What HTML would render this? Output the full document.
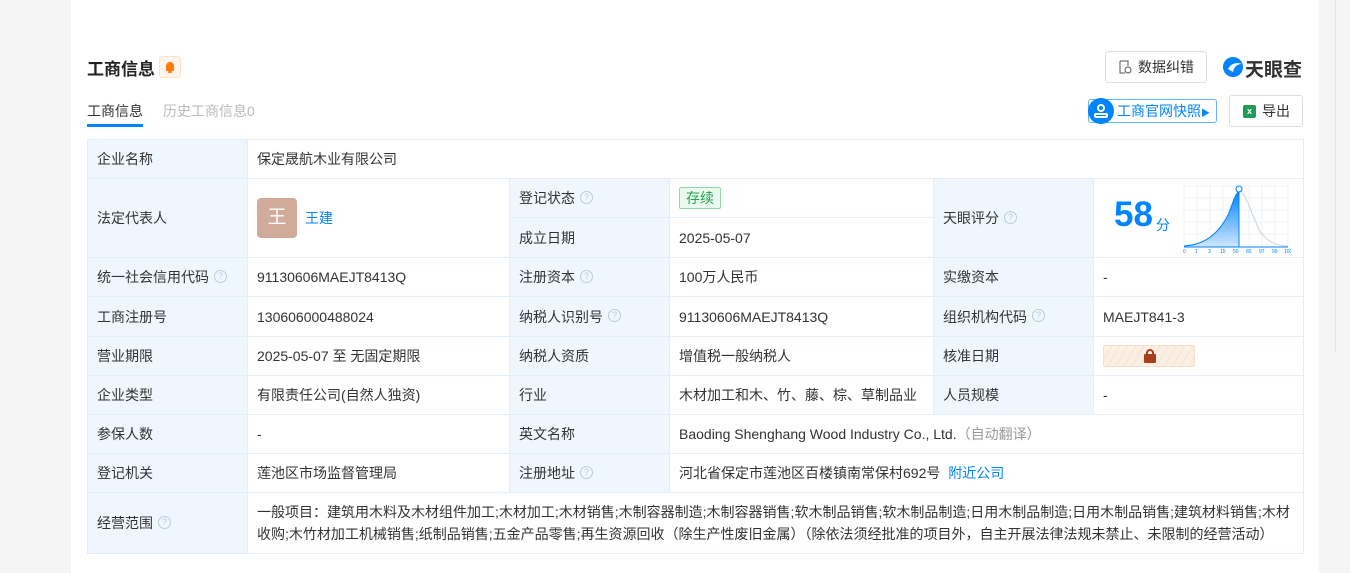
<!DOCTYPE html>
<html><head><meta charset="utf-8"><style>
*{margin:0;padding:0;box-sizing:border-box}
body{width:1350px;height:573px;background:#f5f5f5;font-family:"Liberation Sans","Noto Sans CJK SC",sans-serif;color:#333;font-size:14px;position:relative;overflow:hidden}
.card{position:absolute;left:71px;top:0;width:1248px;height:573px;background:#fff}
.abs{position:absolute}
table{position:absolute;left:87px;top:139px;border-collapse:collapse;table-layout:fixed;width:1216px}
td{border:1px solid #e4eef6;padding:0 9px;vertical-align:middle;font-size:14px;color:#333;white-space:nowrap}
td.l{background:#eff6fd}
.q{display:inline-block;width:13px;height:13px;border:1px solid #b8cde0;border-radius:50%;font-size:9px;line-height:11px;text-align:center;color:#b8cde0;margin-left:5px;vertical-align:middle;position:relative;top:-2px}
.blue{color:#0084ff}
</style></head><body>
<div class="card"></div>
<div style="position:absolute;left:1335px;top:0;width:1px;height:352px;background:#e3e3e3"></div>
<div class="abs" style="left:87px;top:55px;font-size:17px;font-weight:bold;color:#222">工商信息</div>
<div class="abs" style="left:159px;top:56px;width:22px;height:22px;border:1px solid #ffe0c8;background:#fff4ec;border-radius:3px"><div style="position:absolute;left:6px;top:5px;width:8px;height:9px;background:#ff7a0a;border-radius:4px 4px 1px 1px"></div><div style="position:absolute;left:8px;top:14px;width:4px;height:2px;background:#ff7a0a;border-radius:2px"></div></div>
<div class="abs" style="left:87px;top:101px;font-size:14px;color:#333">工商信息</div>
<div class="abs" style="left:87px;top:124px;width:56px;height:3px;background:#0084ff"></div>
<div class="abs" style="left:163px;top:101px;font-size:14px;color:#bbb">历史工商信息0</div>
<div class="abs" style="left:1105px;top:51px;width:102px;height:32px;border:1px solid #ddd;border-radius:3px;font-size:14px;line-height:30px;padding-left:32px">数据纠错
<svg style="position:absolute;left:13px;top:8px" width="13" height="14" viewBox="0 0 13 14"><path d="M1 1h8v5M1 1v12h5" stroke="#555" fill="none"/><circle cx="9" cy="10" r="3" stroke="#555" fill="none"/></svg></div>
<svg class="abs" style="left:1222px;top:56px" width="22" height="22" viewBox="0 0 22 22"><circle cx="11" cy="11" r="10" fill="#0084ff"/><path d="M6 13c3-6 9-7 14-5-4 0-8 2-9 8z" fill="#fff"/></svg>
<div class="abs" style="left:1245px;top:55px;font-size:19px;font-weight:bold;color:#333">天眼查</div>
<div class="abs" style="left:1088px;top:99px;width:129px;height:24px;border:1px solid #66b3ff;border-radius:3px;color:#0084ff;font-size:14px;line-height:22px;padding-left:28px">工商官网快照<span style="font-size:9px">▶</span></div>
<div class="abs" style="left:1088px;top:98px;width:26px;height:26px;border-radius:50%;background:#0084ff"><div style="position:absolute;left:9px;top:6px;width:8px;height:8px;border:2px solid #fff;border-radius:50%"></div><div style="position:absolute;left:6px;top:15px;width:14px;height:5px;border:2px solid #fff;border-radius:2px"></div></div>
<div class="abs" style="left:1229px;top:95px;width:74px;height:32px;border:1px solid #ddd;border-radius:3px;font-size:14px;line-height:30px;padding-left:32px">导出
<div style="position:absolute;left:13px;top:9px;width:13px;height:13px;background:#1f9d55;border-radius:2px;color:#fff;font-size:9px;line-height:13px;text-align:center;font-weight:bold">x</div></div>
<table>
<colgroup><col style="width:160px"><col style="width:262px"><col style="width:160px"><col style="width:264px"><col style="width:160px"><col style="width:210px"></colgroup>
<tr style="height:39px"><td class="l">企业名称</td><td colspan="5">保定晟航木业有限公司</td></tr>
<tr style="height:39px"><td class="l" rowspan="2">法定代表人</td><td rowspan="2"><span style="display:inline-block;width:40px;height:40px;background:#d0ab9a;border-radius:4px;color:#fff;font-size:19px;line-height:40px;text-align:center;vertical-align:middle">王</span><span class="blue" style="margin-left:8px;vertical-align:middle">王建</span></td><td class="l">登记状态<span class="q">?</span></td><td><span style="display:inline-block;border:1px solid #8fdaa6;background:#eafaef;color:#23a34d;padding:0 6px;line-height:20px;border-radius:2px">存续</span></td><td class="l" rowspan="2">天眼评分<span class="q">?</span></td><td rowspan="2" style="position:relative"><span style="position:absolute;left:20px;top:16px;font-size:35px;font-weight:bold;color:#0084ff">58</span><span style="position:absolute;left:62px;top:36px;font-size:14px;color:#0084ff">分</span>
<svg style="position:absolute;left:89px;top:6px" width="108" height="68" viewBox="0 0 108 68"><g stroke="#eef2f6" stroke-width="1"><path d="M1 0v62M14 0v62M27 0v62M40 0v62M53 0v62M66 0v62M79 0v62M92 0v62M105 0v62M1 1h104M1 13h104M1 25h104M1 37h104M1 49h104"/></g><defs><linearGradient id="g" x1="0" y1="0" x2="0" y2="1"><stop offset="0" stop-color="#0084ff"/><stop offset="1" stop-color="#cfe6ff"/></linearGradient></defs><path d="M1 61C20 60 35 50 45 30 50 18 52 9 56 6V62H1z" fill="url(#g)"/><path d="M56 6C63 6 68 30 78 48 86 58 95 61 105 61" stroke="#c8d4e0" fill="none"/><path d="M1 61C20 60 35 50 45 30 50 18 52 9 56 6" stroke="#0084ff" fill="none"/><path d="M56 4v58" stroke="#0084ff"/><circle cx="56" cy="4" r="3" fill="#fff" stroke="#0084ff"/><path d="M1 62h104" stroke="#0084ff"/><text y="68" font-size="5" fill="#0084ff" font-family="Liberation Sans"><tspan x="0">0</tspan><tspan x="12">1</tspan><tspan x="25">3</tspan><tspan x="37">15</tspan><tspan x="50">50</tspan><tspan x="63">85</tspan><tspan x="76">97</tspan><tspan x="89">99</tspan><tspan x="101">100</tspan></text></svg></td></tr>
<tr style="height:40px"><td class="l">成立日期</td><td>2025-05-07</td></tr>
<tr style="height:39px"><td class="l">统一社会信用代码<span class="q">?</span></td><td>91130606MAEJT8413Q</td><td class="l">注册资本<span class="q">?</span></td><td>100万人民币</td><td class="l">实缴资本</td><td>-</td></tr>
<tr style="height:40px"><td class="l">工商注册号</td><td>130606000488024</td><td class="l">纳税人识别号<span class="q">?</span></td><td>91130606MAEJT8413Q</td><td class="l">组织机构代码<span class="q">?</span></td><td>MAEJT841-3</td></tr>
<tr style="height:39px"><td class="l">营业期限</td><td>2025-05-07 至 无固定期限</td><td class="l">纳税人资质</td><td>增值税一般纳税人</td><td class="l">核准日期</td><td><span style="display:inline-block;width:92px;height:22px;background:repeating-linear-gradient(120deg,#fbeee3 0 6px,#f6e2d2 6px 7px);border:1px solid #f3e0d0;border-radius:2px;position:relative;vertical-align:middle"><span style="position:absolute;left:40px;top:8px;width:12px;height:9px;background:#a8401f;border-radius:1px"></span><span style="position:absolute;left:42px;top:3px;width:8px;height:8px;border:2px solid #a8401f;border-radius:4px 4px 0 0"></span></span></td></tr>
<tr style="height:39px"><td class="l">企业类型</td><td>有限责任公司(自然人独资)</td><td class="l">行业</td><td>木材加工和木、竹、藤、棕、草制品业</td><td class="l">人员规模</td><td>-</td></tr>
<tr style="height:39px"><td class="l">参保人数</td><td>-</td><td class="l">英文名称</td><td colspan="3">Baoding Shenghang Wood Industry Co., Ltd.<span style="color:#999">（自动翻译）</span></td></tr>
<tr style="height:39px"><td class="l">登记机关</td><td>莲池区市场监督管理局</td><td class="l">注册地址<span class="q">?</span></td><td colspan="3">河北省保定市莲池区百楼镇南常保村692号 <span class="blue" style="margin-left:4px">附近公司</span></td></tr>
<tr style="height:61px"><td class="l">经营范围<span class="q">?</span></td><td colspan="5" style="white-space:normal;line-height:22px;font-size:14px">一般项目：建筑用木料及木材组件加工;木材加工;木材销售;木制容器制造;木制容器销售;软木制品销售;软木制品制造;日用木制品制造;日用木制品销售;建筑材料销售;木材<br>收购;木竹材加工机械销售;纸制品销售;五金产品零售;再生资源回收（除生产性废旧金属）（除依法须经批准的项目外，自主开展法律法规未禁止、未限制的经营活动）</td></tr>
</table>
</body></html>
